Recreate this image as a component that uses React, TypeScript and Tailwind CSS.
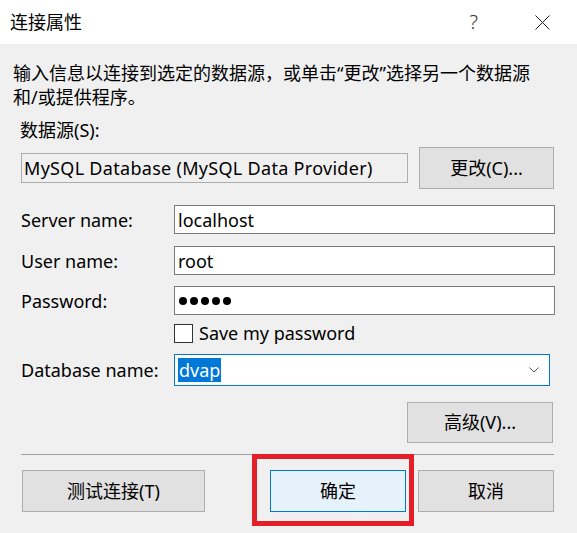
import React from "react";

const font = { fontFamily: '"Noto Sans", "Noto Sans CJK SC", sans-serif' };

function Field({ label, value, mt }: { label: string; value: React.ReactNode; mt: string }) {
  return (
    <div className={`flex items-center leading-[24px] ${mt}`}>
      <div className="w-[174px] pl-[21px] text-[18px]">{label}</div>
      <div className="flex h-[29px] w-[381px] items-center border border-[#7a7a7a] bg-white pl-[3px] text-[18px]">
        {value}
      </div>
    </div>
  );
}

function WinButton({ children, className }: { children: React.ReactNode; className: string }) {
  return (
    <div
      className={`flex items-center justify-center border border-[#adadad] bg-[#e1e1e1] text-[18px] ${className}`}
    >
      {children}
    </div>
  );
}

export default function App() {
  return (
    <div className="relative flex h-[533px] w-[577px] flex-col overflow-hidden bg-[#f0f0f0] text-black" style={font}>
      {/* Title bar */}
      <div className="flex h-[44px] items-center bg-white">
        <div className="pl-[10px] text-[18px]">连接属性</div>
        <div className="ml-auto mr-[57px] text-[20px] font-light text-[#333]">?</div>
        <svg width="15" height="15" viewBox="0 0 15 15" className="mr-[27px]">
          <path d="M0.5 0.5 L14.5 14.5 M14.5 0.5 L0.5 14.5" stroke="#222" strokeWidth="1" />
        </svg>
      </div>

      {/* Description */}
      <div className="mt-[17px] pl-[13px] pr-[20px] text-[18px] leading-[24px]">
        输入信息以连接到选定的数据源，或单击“更改”选择另一个数据源
        <br />
        和/或提供程序。
      </div>
      <div className="mt-[9px] pl-[20px] text-[18px] leading-[24px]">数据源(S):</div>

      {/* Data source row */}
      <div className="mt-[5px] flex items-center">
        <div className="ml-[21px] flex h-[30px] w-[387px] items-center border border-[#adadad] bg-[#f0f0f0] pl-[2px] text-[18px] tracking-[0.3px]">
          MySQL Database (MySQL Data Provider)
        </div>
        <WinButton className="ml-[11px] h-[42px] w-[135px]">更改(C)...</WinButton>
      </div>

      <Field mt="mt-[16px]" label="Server name:" value="localhost" />
      <Field mt="mt-[12px]" label="User name:" value="root" />
      <Field
        mt="mt-[11px]"
        label="Password:"
        value={
          <span className="ml-[1px] flex gap-[3px]">
            {[0, 1, 2, 3, 4].map((i) => (
              <span key={i} className="h-[8px] w-[8px] rounded-full bg-black" />
            ))}
          </span>
        }
      />

      {/* Save password */}
      <div className="mt-[9px] flex h-[19px] items-center pl-[174px] leading-[19px]">
        <div className="h-[19px] w-[19px] border border-[#333] bg-white" />
        <span className="ml-[6px] text-[18px]">Save my password</span>
      </div>

      {/* Database combo */}
      <div className="mt-[11px] flex items-center leading-[24px]">
        <div className="w-[174px] pl-[21px] text-[18px]">Database name:</div>
        <div className="flex h-[32px] w-[376px] items-center border border-[#0078d7] bg-white pl-[3px]">
          <span className="bg-[#0078d7] px-[1px] text-[18px] leading-[24px] text-white">dvap</span>
          <svg width="10" height="6" viewBox="0 0 10 6" className="ml-auto mr-[10px]">
            <path d="M0.5 0.5 L5 5 L9.5 0.5" fill="none" stroke="#555" strokeWidth="1" />
          </svg>
        </div>
      </div>

      {/* Advanced */}
      <div className="mt-[16px] flex justify-end pr-[24px]">
        <WinButton className="h-[41px] w-[146px]">高级(V)...</WinButton>
      </div>

      {/* Separator */}
      <div className="ml-[21px] mt-[11px] h-px w-[533px] bg-[#a0a0a0]" />

      {/* Bottom buttons */}
      <div className="mt-[15px] flex items-center">
        <WinButton className="ml-[22px] h-[42px] w-[183px]">测试连接(T)</WinButton>
        <div className="ml-[65px] flex h-[42px] w-[136px] items-center justify-center border border-[#0078d7] bg-[#e5f1fb] text-[18px]">
          确定
        </div>
        <WinButton className="ml-[12px] h-[42px] w-[136px]">取消</WinButton>
      </div>

      {/* Red highlight annotation */}
      <div className="pointer-events-none absolute left-[252px] top-[454px] h-[72px] w-[162px] border-[5px] border-[#e3202a]" />
    </div>
  );
}
